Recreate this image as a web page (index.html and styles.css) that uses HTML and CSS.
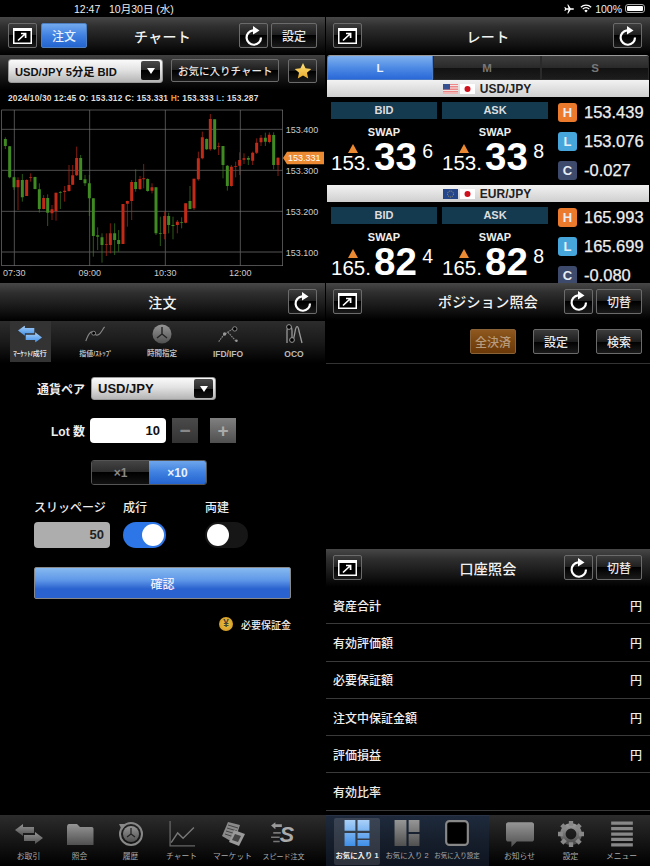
FILE: index.html
```html
<!DOCTYPE html>
<html lang="ja">
<head>
<meta charset="utf-8">
<title>FX</title>
<link rel="stylesheet" href="styles.css">
</head>
<body>
<svg class="defs" aria-hidden="true">
  <defs>
    <linearGradient id="ig" x1="0" y1="0" x2="0" y2="1"><stop offset="0" stop-color="#969696"/><stop offset="1" stop-color="#505050"/></linearGradient>
    <linearGradient id="bg" x1="0" y1="0" x2="0" y2="1"><stop offset="0" stop-color="#a9d0f8"/><stop offset="1" stop-color="#3f8fe8"/></linearGradient>
    <linearGradient id="gold" x1="0" y1="0" x2="0" y2="1"><stop offset="0" stop-color="#ffe27a"/><stop offset="1" stop-color="#e8a92a"/></linearGradient>
    <symbol id="expand" viewBox="0 0 19 16"><rect x="0" y="0" width="19" height="16" fill="#fff"/><rect x="1.5" y="3" width="16" height="11.5" fill="#000"/><path d="M5 12.5 12 6M8 5.5h4.6v4.6" fill="none" stroke="#fff" stroke-width="1.7"/></symbol>
    <symbol id="refresh" viewBox="0 0 20 20"><path d="M17 11.5A7.2 7.2 0 1 1 9 4.4" fill="none" stroke="#fff" stroke-width="2.2"/><path d="M9 0 15.5 4.4 9 8.6Z" fill="#fff"/></symbol>
    <symbol id="arrows" viewBox="0 0 28 20"><path d="M0 6 8 0V3H19V9H8V12Z"/><path d="M28 14 20 8V11H9V17H20V20Z"/></symbol>
  </defs>
</svg>
<div class="app">
  <div class="status">
    <div class="status-left">12:47&nbsp;&nbsp; 10月30日 (水)</div>
    <div class="status-right">
      <svg class="st-plane" viewBox="0 0 12 12"><path d="M12 6c0-.6-.6-1-1.3-1H8L5 .5H4L5.4 5H2.6L1.4 3.6H.5L1.2 6 .5 8.4h.9L2.6 7h2.8L4 11.5h1L8 7h2.7c.7 0 1.3-.4 1.3-1Z" fill="#fff"/></svg>
      <svg class="st-wifi" viewBox="0 0 14 10"><path d="M1 3.5a8.5 8.5 0 0 1 12 0M3.2 5.7a5.4 5.4 0 0 1 7.6 0" fill="none" stroke="#fff" stroke-width="1.5"/><path d="M5 7.6a2.8 2.8 0 0 1 4 0L7 9.8Z" fill="#fff"/></svg>
      <span>100%</span>
      <span class="battery"><span class="battery-fill"></span></span>
    </div>
  </div>

  <div class="main">
    <div class="col">
      <section class="panel chart-panel">
        <header class="head">
          <div class="head-left">
            <button class="btn icon"><svg class="i-expand"><use href="#expand"/></svg></button>
            <button class="btn blue wide">注文</button>
          </div>
          <h2>チャート</h2>
          <div class="head-right">
            <button class="btn icon"><svg class="i-refresh"><use href="#refresh"/></svg></button>
            <button class="btn wide">設定</button>
          </div>
        </header>
        <div class="chart-tools">
          <div class="select chart-select"><span>USD/JPY 5分足 BID</span><span class="drop"><i></i></span></div>
          <button class="btn fav">お気に入りチャート</button>
          <button class="btn star"><svg viewBox="0 0 20 20"><path d="M10 1l2.8 6 6.4.7-4.8 4.3 1.4 6.4L10 15.1l-5.8 3.3 1.4-6.4L.8 7.7 7.2 7Z" fill="url(#gold)"/></svg></button>
        </div>
        <div class="info">2024/10/30 12:45 <b>O</b>: 153.312 <b>C</b>: 153.331 <b class="hi">H</b>: 153.333 <b class="lo">L</b>: 153.287</div>
        <svg class="chart" viewBox="0 18 975 531">
          <rect x="5" y="30" width="843" height="467" fill="#000" stroke="#777" stroke-width="2"/>
          <path d="M43 30V497M269 30V497M496 30V497M721 30V497M5 88H848M5 211H848M5 334H848" stroke="#777" stroke-width="2" fill="none"/>
          <path d="M5 456H848" stroke="#555" stroke-width="3" fill="none"/>
          <path class="wick-g" d="M16 112V147M29 138V235M42 230V270M67 222V305M105 230V268M118 250V338M143 283V378M181 273V327M242 165V240M255 225V258M268 225V348M280 295V470M293 382V450M306 400V488M344 370V465M356 390V455M407 208V275M443 235V275M468 262V405M481 350V438M506 338V400M519 350V418M545 352V385M570 258V328M620 115V150M644 58V150M669 138V235M682 195V272M745 168V195M796 98V138M821 97V208"/>
          <path class="body-g" d="M16 117V138M29 139V232M42 232V262M67 240V292M105 231V267M118 268V327M143 294V338M181 277V279M242 174V240M255 238V250M268 250V295M280 295V408M293 406V410M306 412V435M344 400V420M356 420V432M407 246V267M443 237V273M468 262V400M481 399V401M506 348V375M519 375V378M545 367V369M570 303V327M620 117V148M644 58V148M669 138V195M682 197V258M745 174V179M796 113V125M821 105V195"/>
          <path class="wick-r" d="M54 232V330M80 238V288M92 220V245M131 285V328M156 315V360M168 278V362M194 258V305M207 195V275M218 195V255M230 140V228M319 400V468M331 370V460M369 312V432M382 302V380M395 240V360M420 228V270M431 192V265M456 250V280M494 335V418M532 360V400M557 310V370M582 236V330M595 155V242M607 95V178M631 42V152M656 128V165M694 195V260M707 185V232M719 157V225M732 160V192M758 155V195M770 115V162M783 105V138M808 97V130M834 172V228"/>
          <path class="body-r" d="M54 240V262M80 240V288M92 231V233M131 294V327M156 328V340M168 278V333M194 272V276M207 255V273M218 226V254M230 174V226M319 432V434M331 400V435M369 312V432M382 303V311M395 246V303M420 237V267M431 235V238M456 262V272M494 348V402M532 365V375M557 310V368M582 236V325M595 175V238M607 112V175M631 57V148M656 139V141M694 200V258M707 198V200M719 180V197M732 175V179M758 158V182M770 128V158M783 113V127M808 104V126M834 173V195"/>
          <g class="axis">
            <text x="857" y="99">153.400</text>
            <text x="857" y="222">153.300</text>
            <text x="857" y="345">153.200</text>
            <text x="857" y="467">153.100</text>
            <text x="43" y="529" text-anchor="middle">07:30</text>
            <text x="269" y="529" text-anchor="middle">09:00</text>
            <text x="496" y="529" text-anchor="middle">10:30</text>
            <text x="721" y="529" text-anchor="middle">12:00</text>
          </g>
          <path d="M849 174 861 155H972V193H861Z" fill="#ec8a34"/>
          <text class="tag" x="864" y="183">153.331</text>
        </svg>
      </section>

      <section class="panel order-panel">
        <header class="head">
          <div class="head-left"></div>
          <h2>注文</h2>
          <div class="head-right">
            <button class="btn icon"><svg class="i-refresh"><use href="#refresh"/></svg></button>
          </div>
        </header>
        <nav class="otabs">
          <div class="otab active">
            <svg viewBox="0 0 28 20"><use href="#arrows" fill="url(#bg)"/></svg>
            <span class="tiny">ﾏｰｹｯﾄ/成行</span>
          </div>
          <div class="otab">
            <svg viewBox="0 0 28 20"><path d="M1 19C5 8 8 6 11 8s2 5 6 3 5-7 8-10" fill="none" stroke="#888" stroke-width="1.4"/><circle cx="11" cy="9" r="2.5" fill="#000" stroke="#888" stroke-width="1.2"/></svg>
            <span class="tiny">指値/ｽﾄｯﾌﾟ</span>
          </div>
          <div class="otab">
            <svg viewBox="0 0 20 20"><circle cx="10" cy="10" r="9.5" fill="url(#ig)"/><path d="M10 3V10L15 14M10 10 5 14" stroke="#222" stroke-width="1.4" fill="none"/></svg>
            <span>時間指定</span>
          </div>
          <div class="otab">
            <svg viewBox="0 0 26 20"><path d="M2 19 8 11 20 3M13 8 22 18" fill="none" stroke="#888" stroke-width="1.3" stroke-dasharray="2 1"/><circle cx="21" cy="4" r="2.6" fill="#000" stroke="#999"/><circle cx="9" cy="10" r="2" fill="#999"/><circle cx="23" cy="18" r="1.5" fill="#999"/></svg>
            <span class="latin">IFD/IFO</span>
          </div>
          <div class="otab">
            <svg viewBox="0 0 20 20"><path d="M3 19V7C3 1 8 1 8 7V14M8 14C8 19 9 19 11 8 12 1 14 1 15 7L18 19" fill="none" stroke="#999" stroke-width="1.3"/><circle cx="5" cy="3" r="2.4" fill="#000" stroke="#999"/><circle cx="8" cy="16" r="2.4" fill="#000" stroke="#999"/></svg>
            <span class="latin">OCO</span>
          </div>
        </nav>
        <div class="form">
          <div class="frow r-pair">
            <label>通貨ペア</label>
            <div class="select pair-select"><span>USD/JPY</span><span class="drop"><i></i></span></div>
          </div>
          <div class="frow r-lot">
            <label>Lot 数</label>
            <div class="lot">10</div>
            <button class="step minus">−</button>
            <button class="step plus">+</button>
          </div>
          <div class="seg">
            <span class="seg-item">×1</span>
            <span class="seg-item on">×10</span>
          </div>
          <div class="opts-labels">
            <span class="l-slip">スリッページ</span>
            <span class="l-market">成行</span>
            <span>両建</span>
          </div>
          <div class="opts">
            <div class="slip">50</div>
            <div class="toggle on"><i></i></div>
            <div class="toggle off"><i></i></div>
          </div>
          <button class="confirm">確認</button>
          <div class="margin-link">
            <span class="coin">¥</span>
            <span>必要保証金</span>
          </div>
        </div>
      </section>
    </div>

    <div class="col right">
      <section class="panel rate-panel">
        <header class="head">
          <div class="head-left">
            <button class="btn icon"><svg class="i-expand"><use href="#expand"/></svg></button>
          </div>
          <h2>レート</h2>
          <div class="head-right">
            <button class="btn icon"><svg class="i-refresh"><use href="#refresh"/></svg></button>
          </div>
        </header>
        <div class="rtabs">
          <span class="rtab on">L</span>
          <span class="rtab">M</span>
          <span class="rtab">S</span>
        </div>
        <div class="pair-bar">
          <svg class="flag" viewBox="0 0 15 10"><rect width="15" height="10" fill="#e88"/><path d="M0 1.5H15M0 4H15M0 6.5H15M0 9H15" stroke="#f3e6e6"/><rect width="7" height="5.5" fill="#35508f"/></svg>
          <svg class="flag" viewBox="0 0 15 10"><rect width="15" height="10" fill="#fff"/><circle cx="7.5" cy="5" r="3" fill="#d0101c"/></svg>
          <span>USD/JPY</span>
        </div>
        <div class="quote">
          <div class="side">
            <div class="side-label">BID</div>
            <div class="swap">SWAP</div>
            <i class="tri"></i>
            <div class="price"><span class="p-a">153.</span><span class="p-b">33</span><span class="p-c">6</span></div>
          </div>
          <div class="side">
            <div class="side-label">ASK</div>
            <div class="swap">SWAP</div>
            <i class="tri"></i>
            <div class="price"><span class="p-a">153.</span><span class="p-b">33</span><span class="p-c">8</span></div>
          </div>
          <div class="hlc">
            <div class="hlc-row"><b class="badge h">H</b><span>153.439</span></div>
            <div class="hlc-row"><b class="badge l">L</b><span>153.076</span></div>
            <div class="hlc-row"><b class="badge c">C</b><span>-0.027</span></div>
          </div>
        </div>
        <div class="pair-bar">
          <svg class="flag" viewBox="0 0 15 10"><rect width="15" height="10" fill="#26468c"/><circle cx="7.5" cy="5" r="3" fill="none" stroke="#c9b04a" stroke-width=".8" stroke-dasharray="1 1"/></svg>
          <svg class="flag" viewBox="0 0 15 10"><rect width="15" height="10" fill="#fff"/><circle cx="7.5" cy="5" r="3" fill="#d0101c"/></svg>
          <span>EUR/JPY</span>
        </div>
        <div class="quote">
          <div class="side">
            <div class="side-label">BID</div>
            <div class="swap">SWAP</div>
            <i class="tri"></i>
            <div class="price"><span class="p-a">165.</span><span class="p-b">82</span><span class="p-c">4</span></div>
          </div>
          <div class="side">
            <div class="side-label">ASK</div>
            <div class="swap">SWAP</div>
            <i class="tri"></i>
            <div class="price"><span class="p-a">165.</span><span class="p-b">82</span><span class="p-c">8</span></div>
          </div>
          <div class="hlc">
            <div class="hlc-row"><b class="badge h">H</b><span>165.993</span></div>
            <div class="hlc-row"><b class="badge l">L</b><span>165.699</span></div>
            <div class="hlc-row"><b class="badge c">C</b><span>-0.080</span></div>
          </div>
        </div>
      </section>

      <section class="panel position-panel">
        <header class="head">
          <div class="head-left">
            <button class="btn icon"><svg class="i-expand"><use href="#expand"/></svg></button>
          </div>
          <h2>ポジション照会</h2>
          <div class="head-right">
            <button class="btn icon"><svg class="i-refresh"><use href="#refresh"/></svg></button>
            <button class="btn wide">切替</button>
          </div>
        </header>
        <div class="pos-actions">
          <button class="btn wide orange">全決済</button>
          <button class="btn wide">設定</button>
          <button class="btn wide">検索</button>
        </div>
      </section>

      <section class="panel account-panel">
        <header class="head">
          <div class="head-left">
            <button class="btn icon"><svg class="i-expand"><use href="#expand"/></svg></button>
          </div>
          <h2>口座照会</h2>
          <div class="head-right">
            <button class="btn icon"><svg class="i-refresh"><use href="#refresh"/></svg></button>
            <button class="btn wide">切替</button>
          </div>
        </header>
        <ul class="acct">
          <li><span>資産合計</span><span>円</span></li>
          <li><span>有効評価額</span><span>円</span></li>
          <li><span>必要保証額</span><span>円</span></li>
          <li><span>注文中保証金額</span><span>円</span></li>
          <li><span>評価損益</span><span>円</span></li>
          <li><span>有効比率</span><span></span></li>
        </ul>
      </section>
    </div>
  </div>

  <footer class="bottom">
    <nav class="bar bar-left">
      <div class="ti"><svg viewBox="0 0 30 24"><use href="#arrows" fill="url(#ig)"/></svg><span>お取引</span></div>
      <div class="ti"><svg viewBox="0 0 28 24"><path d="M1 5C1 3 2 2 3 2H11L14 5H26C27 5 27.5 6 27.5 7V23H1Z" fill="url(#ig)"/></svg><span>照会</span></div>
      <div class="ti"><svg viewBox="0 0 26 26"><circle cx="13" cy="13" r="11" fill="none" stroke="#888" stroke-width="2"/><circle cx="13" cy="13" r="8" fill="url(#ig)"/><path d="M13 7V13L17 16M13 13 9 16" stroke="#222" stroke-width="1.2" fill="none"/><path d="M1 3 8 3 4 9Z" fill="#888"/></svg><span>履歴</span></div>
      <div class="ti"><svg viewBox="0 0 24 24"><path d="M1 0V23H24" fill="none" stroke="#666" stroke-width="1.2"/><path d="M2 20 8 11 13 16 23 6" fill="none" stroke="#777" stroke-width="1.3"/></svg><span>チャート</span></div>
      <div class="ti"><svg viewBox="0 0 26 26"><path d="M8 1 20 4 14 22 2 15Z" fill="#8a8a8a"/><path d="M8 4 18 7M7 7 17 10M6 10 16 13M5 13 14 16" stroke="#444"/><path d="M14 9 25 13 19 25 9 21Z" fill="#9a9a9a"/><path d="M15 13 21 15 18 21 12 19Z" fill="#444"/></svg><span>マーケット</span></div>
      <div class="ti"><svg viewBox="0 0 26 24"><path d="M1 4 5 1V3H11V5.5H5V7.5Z" fill="#999"/><path d="M3 11H10M1 15H9M3 19H9" stroke="#777" stroke-width="1.5"/><text class="speed-s" x="9" y="19">S</text></svg><span class="xs2">スピード注文</span></div>
    </nav>
    <nav class="bar bar-fav">
      <div class="ti active"><svg viewBox="0 0 23 24"><path d="M0 0H10V10H0ZM12 0H23V10H12ZM0 12H10V24H0ZM12 12H23V17H12ZM12 18.5H23V24H12Z" fill="url(#bg)"/></svg><span>お気に入り 1</span></div>
      <div class="ti"><svg viewBox="0 0 23 24"><path d="M0 0H11V24H0ZM13 0H23V11H13ZM13 13H23V24H13Z" fill="url(#ig)"/></svg><span>お気に入り 2</span></div>
      <div class="ti"><svg viewBox="0 0 22 24"><rect x="1" y="1" width="20" height="22" rx="3" fill="#000" stroke="#888" stroke-width="2"/></svg><span class="xs">お気に入り設定</span></div>
    </nav>
    <nav class="bar bar-end">
      <div class="ti"><svg viewBox="0 0 26 24"><path d="M2 1H24C25 1 26 2 26 3V17C26 18 25 19 24 19H10L5 24V19H2C1 19 0 18 0 17V3C0 2 1 1 2 1Z" fill="url(#ig)"/></svg><span>お知らせ</span></div>
      <div class="ti"><svg viewBox="0 0 24 24"><circle cx="12" cy="12" r="7.5" fill="none" stroke="url(#ig)" stroke-width="5"/><path d="M12 0V24M0 12H24M3.5 3.5 20.5 20.5M20.5 3.5 3.5 20.5" stroke="#888" stroke-width="4" stroke-dasharray="4.5 15 4.5 24"/></svg><span>設定</span></div>
      <div class="ti"><svg viewBox="0 0 20 24"><path d="M0 2H20M0 7H20M0 12H20M0 17H20M0 22H20" stroke="#888" stroke-width="3"/></svg><span>メニュー</span></div>
    </nav>
  </footer>
</div>
</body>
</html>
```
FILE: styles.css
```css
* { box-sizing: border-box; }
html, body { margin: 0; padding: 0; background: #000; }
body {
  width: 650px; height: 866px; overflow: hidden;
  font-family: "Liberation Sans", "Noto Sans CJK JP", sans-serif;
  color: #eee;
}
.defs { position: absolute; width: 0; height: 0; }
.app { display: flex; flex-direction: column; height: 866px; }

/* status bar */
.status { height: 17px; display: flex; justify-content: space-between; align-items: center; font-size: 10.5px; color: #eee; }
.status-left { margin-left: 74px; }
.status-right { display: flex; align-items: center; margin-right: 5px; gap: 3px; }
.st-plane { width: 10px; height: 10px; }
.st-wifi { width: 12px; height: 9px; margin-left: 3px; }
.battery { width: 20px; height: 9px; border: 1px solid #aaa; border-radius: 3px; padding: 1px; display: block; }
.battery-fill { display: block; height: 100%; background: #fff; border-radius: 1px; }

/* layout */
.main { display: grid; grid-template-columns: 325px 325px; height: 798px; }
.col { display: flex; flex-direction: column; min-width: 0; }
.col.right { padding-left: 1px; }
.panel { overflow: hidden; }
.chart-panel { height: 266px; }
.order-panel { height: 532px; }
.rate-panel { height: 266px; }
.position-panel { height: 266px; }
.account-panel { height: 266px; }

/* panel header */
.head {
  height: 38px; display: flex; align-items: center; justify-content: space-between;
  padding: 0 8px 1px 8px; position: relative;
  background: linear-gradient(#474747 0, #2f2f2f 25%, #141414 70%, #000 100%);
}
.right .head { padding-left: 7px; }
.head h2 { position: absolute; left: 0; right: 0; margin: 0; text-align: center; font-size: 14px; font-weight: 500; color: #f2f2f2; letter-spacing: .3px; pointer-events: none; }
.head-left, .head-right { display: flex; gap: 3px; }
.chart-panel .head-left { gap: 4px; }

.btn {
  height: 25px; padding: 0; border: 1px solid #6b6b6b; border-radius: 2px;
  background: linear-gradient(#3c3c3c 0, #1d1d1d 50%, #000 50%, #1a1a1a 100%);
  color: #e8e8e8; font: 500 12px "Liberation Sans", "Noto Sans CJK JP", sans-serif;
  display: flex; align-items: center; justify-content: center;
}
.btn.icon { width: 29px; }
.btn.wide { width: 46px; }
.btn.blue { background: linear-gradient(#72a9ee 0, #3f80e0 50%, #2464d0 100%); border-color: #4d7fc0; color: #e6f1ff; }
.btn.orange { background: linear-gradient(#8f5820 0, #7a4610 50%, #6b3808 100%); border-color: #8a6238; color: #b89a7c; }
.i-expand { width: 19px; height: 16px; }
.i-refresh { width: 20px; height: 20px; }

/* chart toolbar */
.chart-tools {
  height: 35px; display: flex; align-items: center; padding: 0 8px 4px; gap: 0;
  background: linear-gradient(#404040 0, #222 40%, #000 100%);
}
.select {
  display: flex; align-items: center; justify-content: space-between; color: #111; font-weight: 700; font-size: 11.2px;
  background: linear-gradient(#fafafa 0, #e2e2e2 45%, #b5b5b5 100%);
  border: 1px solid #999; border-radius: 3px; padding: 0 2px 0 6px;
}
.chart-select { width: 156px; height: 24px; }
.drop { width: 19px; height: 19px; border-radius: 2px; background: linear-gradient(#4a4a4a 0, #2a2a2a 50%, #000 50%, #111 100%); display: flex; align-items: center; justify-content: center; }
.drop i { width: 0; height: 0; border-left: 4px solid transparent; border-right: 4px solid transparent; border-top: 6px solid #fff; }
.btn.fav { width: 108px; height: 23px; margin-left: 8px; font-size: 10.5px; }
.btn.star { width: 29px; height: 24px; margin-left: 9px; }
.btn.star svg { width: 18px; height: 18px; }

.info { height: 16px; padding: 1px 0 0 8px; font-size: 8.4px; font-weight: 700; color: #ddd; line-height: 14px; letter-spacing: .17px; white-space: nowrap; }
.info b { color: #eee; }
.info .hi { color: #e89a2a; }
.info .lo { color: #4f9fd8; }

.chart { display: block; width: 325px; height: 177px; }
.wick-g, .wick-r { fill: none; stroke-width: 2; }
.body-g, .body-r { fill: none; stroke-width: 9; }
.wick-g, .body-g { stroke: #3f8a22; }
.wick-r, .body-r { stroke: #c22a18; }
.axis text { font-size: 27px; fill: #ccc; font-family: "Liberation Sans", sans-serif; }
.tag { font-size: 27px; fill: #fff; font-family: "Liberation Sans", sans-serif; }

/* order panel */
.otabs {
  height: 42px; display: grid; grid-template-columns: repeat(5, 66px); justify-items: center; margin-left: -3px; width: 331px;
  background: linear-gradient(#2c2c2c 0, #1a1a1a 50%, #000 100%);
}
.otab { width: 41px; height: 41px; display: flex; flex-direction: column; align-items: center; justify-content: flex-start; padding-top: 3px; color: #bbb; font-size: 7.5px; font-weight: 700; white-space: nowrap; line-height: 12px; }
.otab svg { width: 22px; height: 20px; margin-bottom: 4px; }
.otab.active { background: #333; color: #ddd; }
.otab.active svg { width: 24px; height: 18px; margin: 1px 0 5px; }
.tiny { font-size: 7px; }
.latin { font-size: 8.5px; }

.form { display: flex; flex-direction: column; padding-top: 14px; }
.frow { display: flex; align-items: center; }
.frow label { width: 85px; text-align: right; font-size: 12px; font-weight: 700; color: #eee; }
.r-pair { height: 23px; }
.pair-select { width: 125px; height: 23px; margin-left: 6px; font-size: 13px; padding-left: 6px; }
.r-lot { height: 25px; margin-top: 18px; }
.lot { width: 76px; height: 25px; margin-left: 5px; background: #fff; border-radius: 4px; color: #111; font-size: 13px; font-weight: 700; text-align: right; padding-right: 6px; line-height: 25px; }
.step { width: 26px; height: 25px; padding: 0; border: 0; color: #888; font: 700 19px "Liberation Sans", sans-serif; line-height: 22px; }
.minus { margin-left: 6px; background: linear-gradient(#4a4a4a, #333); color: #888; }
.plus { margin-left: 12px; background: linear-gradient(#808080, #4f4f4f); color: #aaa; }
.seg { display: flex; width: 116px; height: 25px; margin: 17px 0 0 91px; border: 1px solid #555; border-radius: 3px; overflow: hidden; font-weight: 700; font-size: 12px; }
.seg-item { flex: 1; display: flex; align-items: center; justify-content: center; background: linear-gradient(#444 0, #2c2c2c 50%, #000 50%, #111 100%); color: #888; }
.seg-item.on { background: linear-gradient(#6ea6ec 0, #3f80e0 50%, #2464d0 100%); color: #e6f1ff; }
.opts-labels { display: flex; height: 16px; margin-top: 15px; padding-left: 34px; font-size: 12px; font-weight: 500; color: #eee; line-height: 16px; }
.l-slip { width: 89px; }
.l-market { width: 82px; }
.opts { display: flex; margin-top: 6px; padding-left: 34px; height: 26px; }
.slip { width: 76px; height: 26px; background: #adadad; border-radius: 4px; color: #222; text-align: right; font-weight: 700; font-size: 13px; line-height: 26px; padding-right: 6px; }
.toggle { width: 43px; height: 26px; border-radius: 13px; padding: 2px; display: flex; }
.toggle i { display: block; width: 22px; height: 22px; border-radius: 50%; background: #fff; }
.toggle.on { margin-left: 13px; background: #2d76e8; justify-content: flex-end; }
.toggle.off { margin-left: 39px; background: #161616; }
.confirm { width: 257px; height: 32px; margin: 19px 0 0 34px; border: 1px solid #888; border-radius: 2px; background: linear-gradient(#86b9f0 0, #5f98e8 40%, #2a62cf 70%, #2a62cf 100%); color: #eef; font: 500 12px "Liberation Sans", "Noto Sans CJK JP", sans-serif; }
.margin-link { display: flex; align-items: center; justify-content: flex-end; gap: 8px; width: 291px; height: 16px; margin-top: 17px; font-size: 10px; font-weight: 500; color: #eee; }
.coin { width: 14px; height: 14px; border-radius: 50%; background: radial-gradient(#f3c544, #c98f1e); color: #443; font-size: 10px; font-weight: 700; text-align: center; line-height: 14px; }

/* rate panel */
.rtabs { height: 25px; margin: 0 1px; display: grid; grid-template-columns: 106px 108px 108px; border-radius: 3px 3px 0 0; border-top: 1px solid #999; overflow: hidden; }
.rtab { display: flex; align-items: center; justify-content: center; font-size: 11.5px; font-weight: 700; color: #777; background: linear-gradient(#3e3e3e 0, #2a2a2a 50%, #111 50%, #1c1c1c 100%); border: 1px solid #2a2a2a; border-top: 0; }
.rtab.on { color: #eaf2ff; background: linear-gradient(#7fb1ef 0, #4e8be4 50%, #2a68d8 100%); border-color: #4a7cc8; }
.pair-bar { height: 17px; display: flex; align-items: center; justify-content: center; gap: 2px; margin: 0 1px; padding-right: 2px; font-size: 12px; font-weight: 700; color: #222; background: linear-gradient(#f2f2f2, #cfcfcf); }
.pair-bar span { margin-left: 3px; }
.flag { width: 15px; height: 10px; }
.quote { display: flex; height: 88px; padding: 5px 0 0 5px; }
.side { width: 106px; margin-right: 5px; display: flex; flex-direction: column; }
.side-label { height: 17px; background: #143a50; color: #ddd; font-size: 11px; font-weight: 700; text-align: center; line-height: 17px; }
.swap { height: 12px; margin-top: 7px; color: #eee; font-size: 11px; font-weight: 700; text-align: center; line-height: 12px; }
.tri { display: block; width: 0; height: 0; margin: 6px 0 0 17px; border-left: 5.5px solid transparent; border-right: 5.5px solid transparent; border-bottom: 9px solid #ec8a34; }
.price { display: flex; align-items: baseline; height: 30px; margin-top: -14px; color: #fff; white-space: nowrap; line-height: 36px; }
.p-a { font-size: 20.5px; }
.p-b { font-size: 38.5px; font-weight: 700; margin-left: 3px; letter-spacing: .3px; }
.p-c { font-size: 19.5px; position: relative; top: -12px; margin-left: 5px; }
.hlc { display: flex; flex-direction: column; margin-left: 5px; gap: 10px; padding-top: 1px; }
.hlc-row { display: flex; align-items: center; height: 19px; font-size: 16.5px; color: #eee; }
.hlc-row span { margin-left: 7px; -webkit-text-stroke: .25px #eee; }
.badge { width: 19px; height: 19px; border-radius: 3px; font-size: 13px; color: #e8eef5; text-align: center; line-height: 19px; }
.badge.h { background: #ec7a2c; }
.badge.l { background: #46a6dc; }
.badge.c { background: #3e4a6c; }

/* position panel */
.pos-actions { display: flex; justify-content: flex-end; gap: 17px; height: 44px; padding: 9px 8px 0 0; border-bottom: 1px solid #333; }
.position-panel .head { height: 37px; }
.pos-actions .btn { height: 25px; }

/* account panel */
.acct { list-style: none; margin: 0; padding: 0; }
.acct li { height: 37.3px; display: flex; align-items: center; justify-content: space-between; padding: 0 8px 0 7px; border-bottom: 1px solid #3a3a3a; font-size: 12px; font-weight: 500; color: #eee; }

/* bottom bar */
.bottom { display: flex; height: 51px; }
.bar { display: flex; height: 51px; }
.bar-left { width: 326px; padding-left: 3px; background: linear-gradient(#2c2c2c 0, #161616 50%, #000 100%); }
.bar-fav { width: 163px; padding-left: 6px; background: linear-gradient(#1e2a3c 0, #161e2c 50%, #0e1420 100%); border-top: 1px solid #2a3446; }
.bar-end { width: 161px; padding-left: 5px; background: linear-gradient(#2c2c2c 0, #161616 50%, #000 100%); }
.ti { width: 51px; display: flex; flex-direction: column; align-items: center; padding-top: 6px; color: #aaa; font-size: 7.8px; white-space: nowrap; line-height: 11px; }
.bar-fav .ti { width: 50px; padding-top: 4px; font-size: 7.4px; }
.ti svg { width: 28px; height: 26px; margin-bottom: 4px; flex: none; }
.ti.active { width: 46px; margin: 2px 2px 0; height: 47px; padding-top: 2px; background: rgba(255, 255, 255, .13); border-radius: 2px; color: #eee; font-weight: 700; }
.xs { font-size: 6.5px; }
.xs2 { font-size: 7px; }
.speed-s { font: italic 700 20px "Liberation Sans", sans-serif; fill: #aaa; }
```
